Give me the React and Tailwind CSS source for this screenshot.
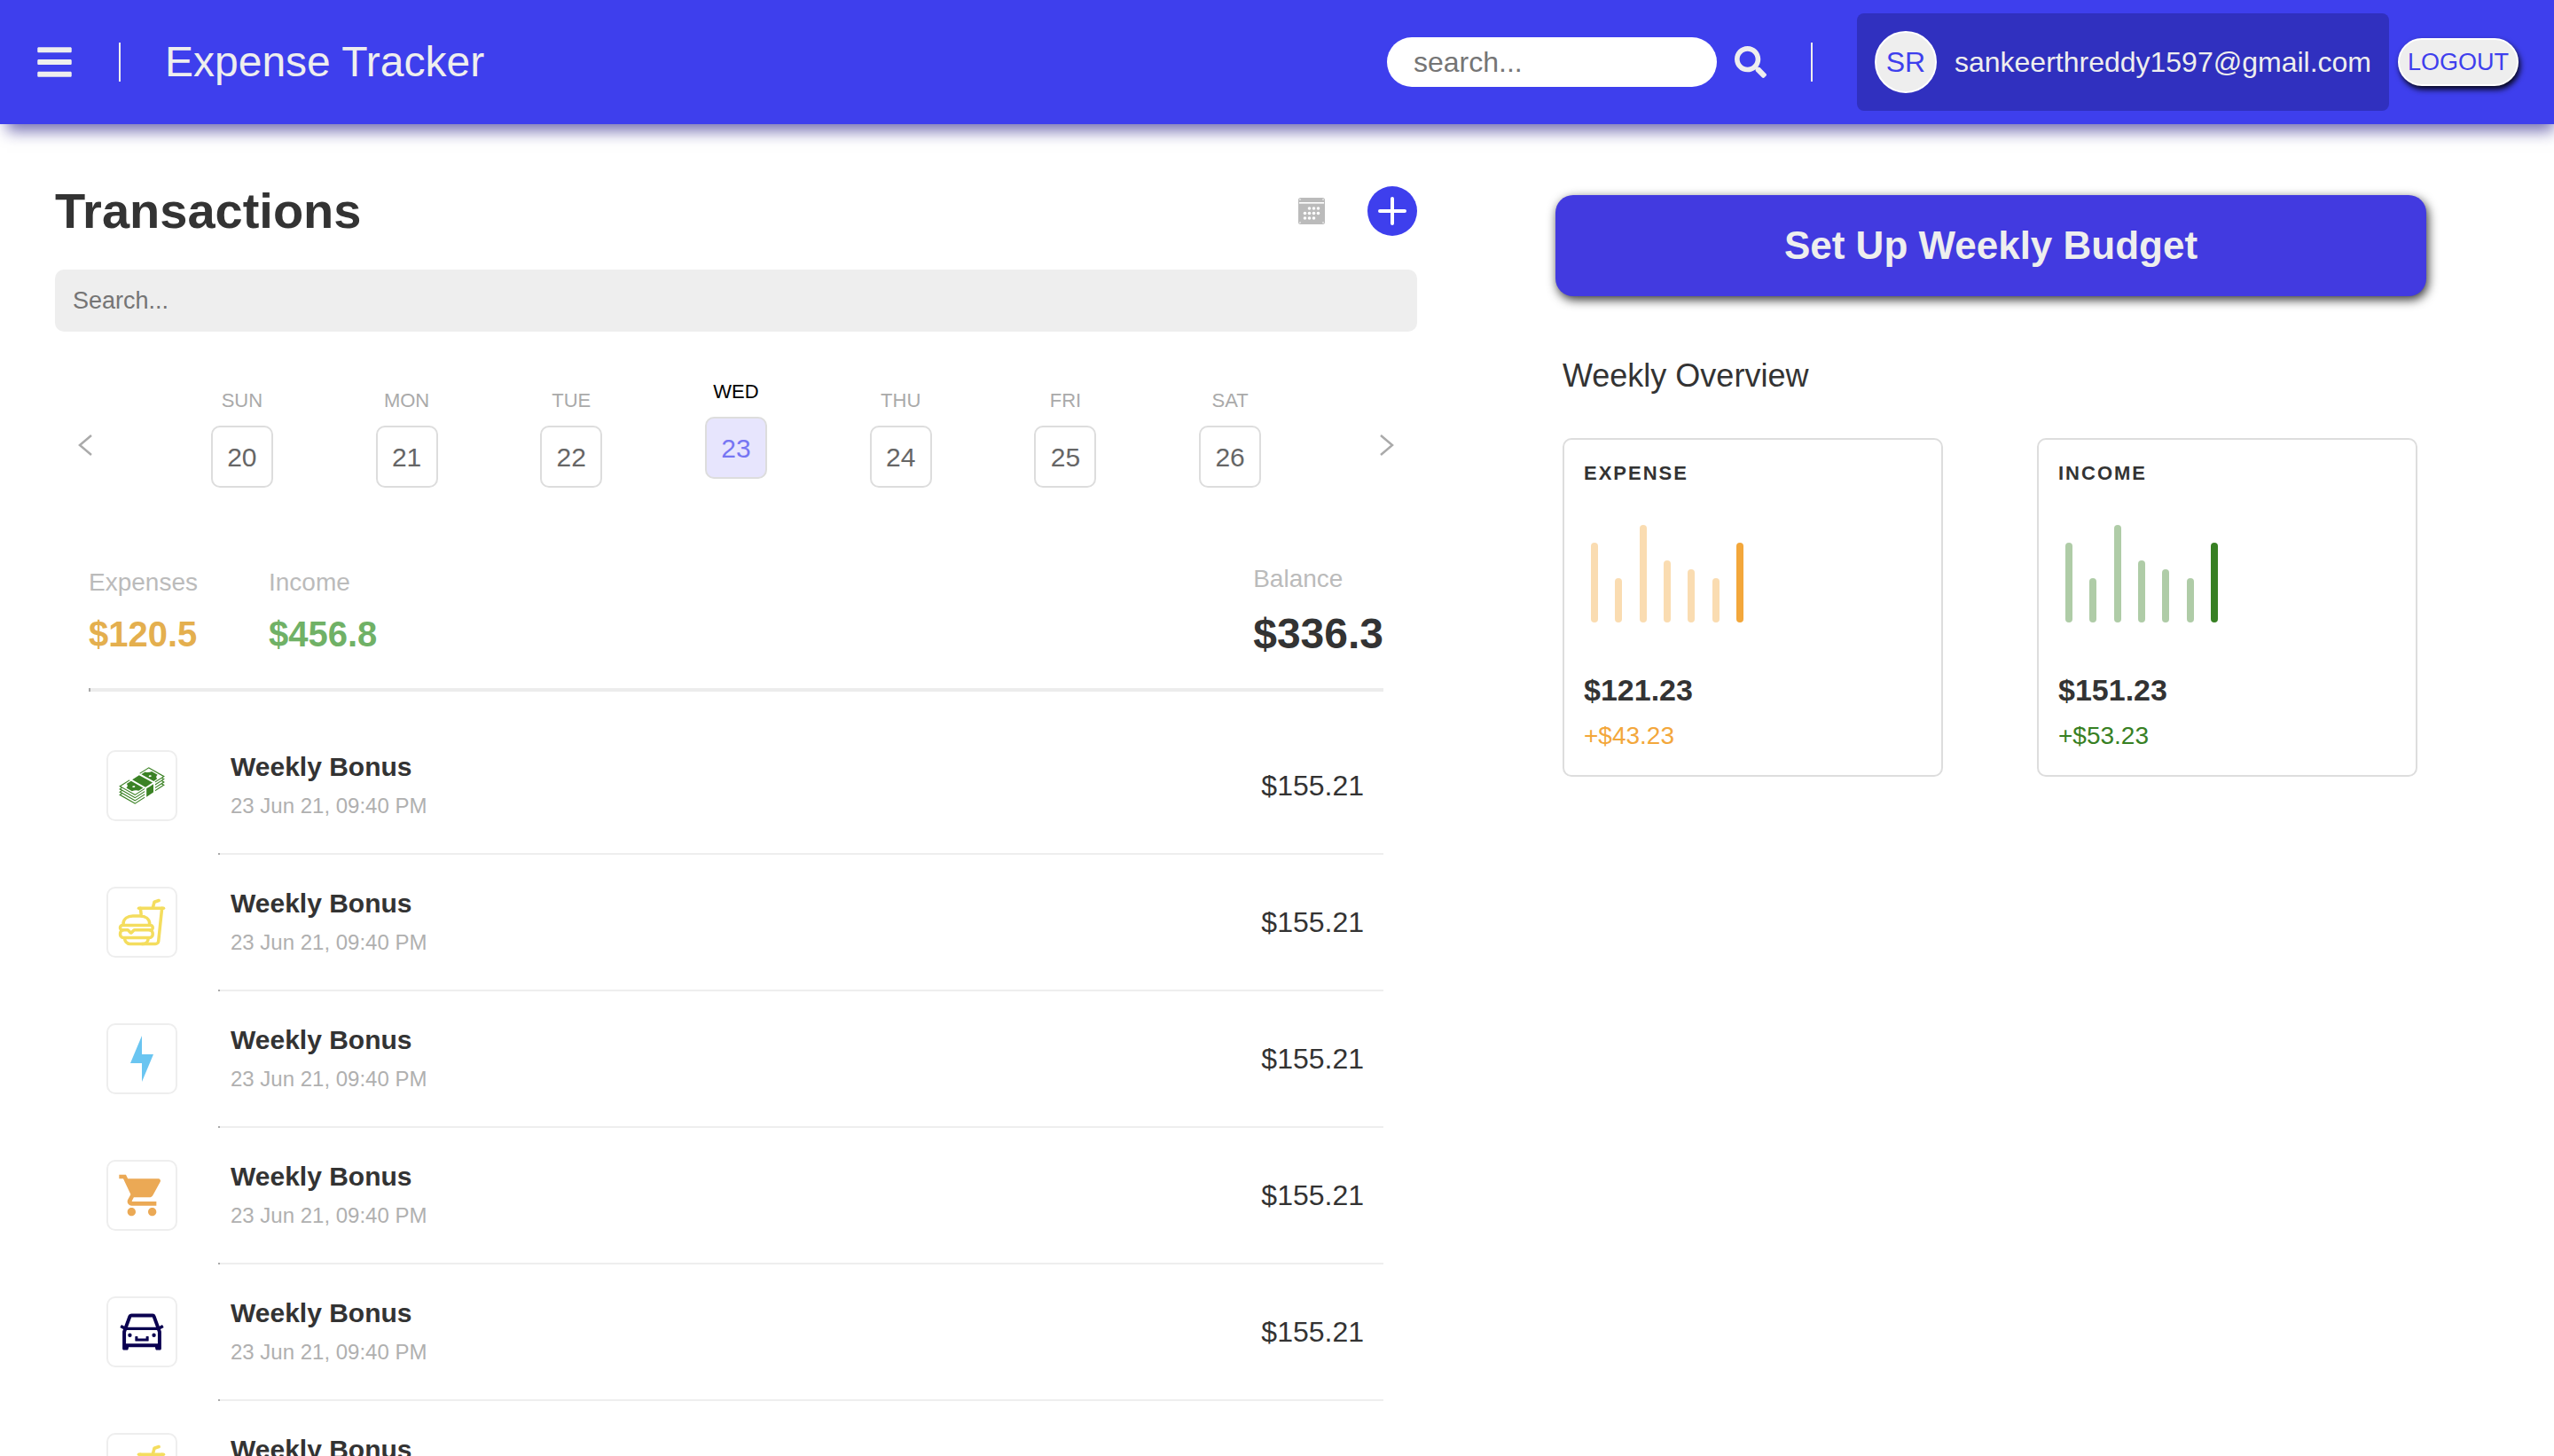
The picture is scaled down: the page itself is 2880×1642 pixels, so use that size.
import { GiMoneyStack } from "react-icons/gi";
import { FaBars, FaSearch } from "react-icons/fa";
import { IoFastFoodOutline } from "react-icons/io5";
import { MdShoppingCart } from "react-icons/md";
import { AiOutlineCar } from "react-icons/ai";

const days = [
  { label: "SUN", date: 20 },
  { label: "MON", date: 21 },
  { label: "TUE", date: 22 },
  { label: "WED", date: 23, selected: true },
  { label: "THU", date: 24 },
  { label: "FRI", date: 25 },
  { label: "SAT", date: 26 },
];

function BoltIcon() {
  return (
    <svg viewBox="0 0 56 56" className="size-14" fill="#6ac5f1" aria-hidden="true">
      <path d="M28 2 15 33H28V54L41 23H28Z" />
    </svg>
  );
}

const transactions = [
  <GiMoneyStack className="size-14 text-[#3b8225]" />,
  <IoFastFoodOutline className="size-14 text-[#f4dd5e]" />,
  <BoltIcon />,
  <MdShoppingCart className="size-14 text-[#eba955]" />,
  <AiOutlineCar className="size-14 text-[#0a0050]" />,
  <IoFastFoodOutline className="size-14 text-[#f4dd5e]" />,
].map((icon, id) => ({
  id,
  icon,
  name: "Weekly Bonus",
  time: "23 Jun 21, 09:40 PM",
  amount: "$155.21",
}));

const bars = [90, 50, 110, 70, 60, 50, 90];

function Divider() {
  return <span className="h-11 w-0.5 bg-[#eee]" />;
}

function CalendarIcon() {
  const dots = [
    [12.5, 12], [17.5, 12], [22.5, 12],
    [7.5, 17.5], [12.5, 17.5], [17.5, 17.5], [22.5, 17.5],
    [7.5, 23], [12.5, 23], [17.5, 23],
  ];
  const corners = [[2, 2], [28, 2], [2, 28], [28, 28]];
  return (
    <svg viewBox="0 0 30 30" className="size-[30px]" aria-hidden="true">
      <rect width="30" height="30" rx="2.5" fill="#bbb" />
      <rect x="1" y="5" width="28" height="1.6" fill="#fff" />
      {dots.map(([x, y]) => (
        <circle key={`${x}-${y}`} cx={x} cy={y} r="1.8" fill="#fff" />
      ))}
      {corners.map(([x, y]) => (
        <circle key={`${x}-${y}`} cx={x} cy={y} r="0.8" fill="#fff" />
      ))}
    </svg>
  );
}

function Chevron({ d }) {
  return (
    <svg viewBox="0 0 16 24" className="h-6 w-4" fill="none" stroke="#aaa" strokeWidth="2.5" aria-hidden="true">
      <path d={d} />
    </svg>
  );
}

function Header() {
  return (
    <header className="relative z-10 flex h-[140px] shrink-0 items-center justify-between bg-[#3e3fed] pr-10 pl-[42px] text-[#eee] shadow-[4px_12px_16px_-4px_rgba(30,22,130,0.6)]">
      <div className="flex items-center">
        <button type="button" aria-label="Menu" className="mr-[53px]">
          <FaBars className="h-11 w-[39px]" />
        </button>
        <Divider />
        <span className="ml-[50px] text-[48px] leading-[56px]">Expense Tracker</span>
      </div>
      <div className="flex items-center">
        <input
          type="text"
          aria-label="Search"
          placeholder="search..."
          className="h-14 w-[372px] rounded-full bg-white px-[30px] text-[32px] text-[#333] placeholder:text-[#757575]"
        />
        <button type="button" aria-label="Submit search" className="mr-[50px] ml-5">
          <FaSearch className="size-9" />
        </button>
        <Divider />
        <div className="ml-[50px] flex h-[110px] items-center gap-5 rounded-lg bg-[#3030bf] px-5 text-[32px] leading-10">
          <span className="flex size-[70px] items-center justify-center rounded-full border-2 border-white bg-[#eee] text-[#3e3fed]">
            SR
          </span>
          <span>sankeerthreddy1597@gmail.com</span>
        </div>
        <button
          type="button"
          className="ml-2.5 h-[54px] w-[136px] rounded-full border-2 border-white bg-[#eee] text-[27px] leading-8 whitespace-nowrap text-[#3e3fed] shadow-[2px_4px_6px_rgba(0,0,0,0.9)]"
        >
          LOGOUT
        </button>
      </div>
    </header>
  );
}

function Week() {
  return (
    <div className="mt-16 flex items-center">
      <button type="button" aria-label="Previous week" className="flex w-[68px] justify-center pt-4">
        <Chevron d="M15 1 2 12 15 23" />
      </button>
      <div className="mx-[50px] grid flex-1 grid-cols-7">
        {days.map(({ label, date, selected }) => (
          <button
            type="button"
            key={label}
            className={selected ? "-mt-2.5 mb-2.5 flex flex-col items-center text-black" : "flex flex-col items-center text-[#aaa]"}
          >
            <span className="text-[22px] leading-7">{label}</span>
            <span
              className={
                selected
                  ? "mt-3.5 flex size-[70px] items-center justify-center rounded-[10px] border-2 border-[#ddd] bg-[#e7e5fd] text-[30px] text-[#7676f3]"
                  : "mt-3.5 flex size-[70px] items-center justify-center rounded-[10px] border-2 border-[#ddd] text-[30px] text-[#666]"
              }
            >
              {date}
            </span>
          </button>
        ))}
      </div>
      <button type="button" aria-label="Next week" className="flex w-[68px] justify-center pt-4">
        <Chevron d="M1 1 14 12 1 23" />
      </button>
    </div>
  );
}

function Summary() {
  return (
    <>
      <div className="mt-[85px] flex items-center justify-between text-[28px] leading-9 text-[#bbb]">
        <div className="flex gap-20">
          <div>
            <p>Expenses</p>
            <p className="mt-4 text-[40px] leading-[48px] font-bold text-[#e4af4e]">$120.5</p>
          </div>
          <div>
            <p>Income</p>
            <p className="mt-4 text-[40px] leading-[48px] font-bold text-[#70b166]">$456.8</p>
          </div>
        </div>
        <div>
          <p>Balance</p>
          <p className="mt-4 text-[48px] leading-[56px] font-bold text-[#333]">$336.3</p>
        </div>
      </div>
      <hr className="mt-[33px] h-1 border-0 border-l-2 border-[#aaa] bg-[#ececec]" />
    </>
  );
}

function Transaction({ icon, name, time, amount }) {
  return (
    <li className="flex pl-5">
      <div className="mt-9 flex size-20 items-center justify-center rounded-[10px] border-2 border-[#eee]">{icon}</div>
      <div className="ml-[46px] flex-1">
        <div className="flex h-[152px] items-center justify-between pr-[22px] pl-3.5 text-[#333]">
          <div>
            <p className="text-[30px] leading-9 font-bold">{name}</p>
            <p className="mt-2.5 text-[24px] leading-8 text-[#b0b0b0]">{time}</p>
          </div>
          <p className="text-[32px] leading-10">{amount}</p>
        </div>
        <hr className="h-0.5 border-0 border-l-2 border-[#aaa] bg-[#eee]" />
      </div>
    </li>
  );
}

function OverviewCard({ title, total, change, color, fill }) {
  return (
    <article className="rounded-[10px] border-2 border-[#ddd] px-[22px] pt-6 pb-[26px] text-[#333]">
      <h3 className="text-[22px] leading-7 font-bold tracking-[2px]">{title}</h3>
      <div className="mt-11 ml-2 flex h-[110px] w-[172px] items-end justify-between">
        {bars.map((height, i) => (
          <span
            key={i}
            className={`w-2 rounded-full ${fill} ${i < bars.length - 1 ? "opacity-40" : ""}`}
            style={{ height }}
          />
        ))}
      </div>
      <p className="mt-14 text-[34px] leading-10 font-bold">{total}</p>
      <p className={`mt-3.5 text-[28px] leading-9 ${color}`}>{change}</p>
    </article>
  );
}

export default function App() {
  return (
    <div className="flex h-screen flex-col bg-white font-['Liberation_Sans',Arial,sans-serif]">
      <Header />
      <main className="grid min-h-0 flex-1 grid-cols-[83fr_61fr] items-start overflow-y-auto [scrollbar-width:none]">
        <section className="px-[62px] pt-[70px]">
          <div className="flex items-center justify-between">
            <h1 className="text-[56px] leading-[56px] font-bold text-[#333]">Transactions</h1>
            <div className="flex items-center gap-12">
              <button type="button" aria-label="Open calendar">
                <CalendarIcon />
              </button>
              <button
                type="button"
                aria-label="Add transaction"
                className="flex size-14 items-center justify-center rounded-full bg-[#3e3fed]"
              >
                <svg viewBox="0 0 32 32" className="size-8" stroke="#fff" strokeWidth="4" strokeLinecap="round" aria-hidden="true">
                  <path d="M16 2V30M2 16H30" />
                </svg>
              </button>
            </div>
          </div>
          <input
            type="text"
            aria-label="Search transactions"
            placeholder="Search..."
            className="mt-[38px] block h-[70px] w-full rounded-[10px] bg-[#eee] px-5 text-[27px] text-[#333] placeholder:text-[#757575]"
          />
          <Week />
          <div className="px-[38px]">
            <Summary />
            <ul className="mt-[30px]">
              {transactions.map((t) => (
                <Transaction key={t.id} {...t} />
              ))}
            </ul>
          </div>
        </section>
        <section className="pt-20 pr-36 pl-[94px]">
          <button
            type="button"
            className="h-[114px] w-full rounded-[20px] bg-[#423ae0] text-[44px] font-bold text-[#eee] shadow-[2px_4px_12px_rgba(0,0,0,0.8)]"
          >
            Set Up Weekly Budget
          </button>
          <div className="mt-[68px] pr-2.5 pl-2">
            <h2 className="text-[36px] leading-[44px] text-[#333]">Weekly Overview</h2>
            <div className="mt-12 grid grid-cols-2 gap-[106px]">
              <OverviewCard title="EXPENSE" total="$121.23" change="+$43.23" color="text-[#f3a73b]" fill="bg-[#f3a73b]" />
              <OverviewCard title="INCOME" total="$151.23" change="+$53.23" color="text-[#378023]" fill="bg-[#378023]" />
            </div>
          </div>
        </section>
      </main>
    </div>
  );
}
